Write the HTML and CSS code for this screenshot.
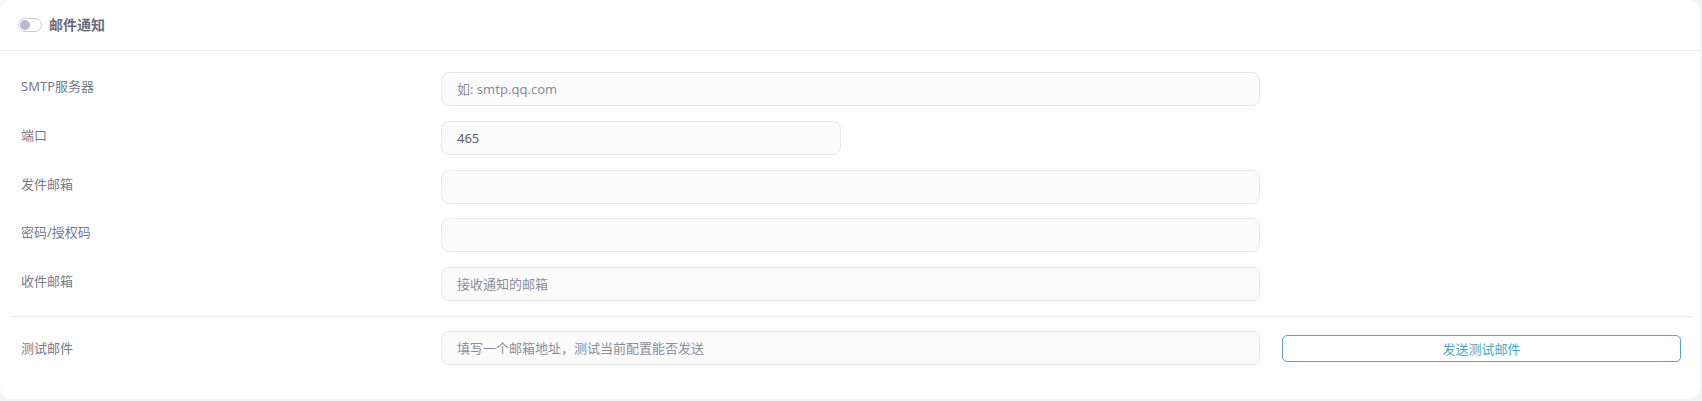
FILE: index.html
```html
<!DOCTYPE html>
<html lang="zh-CN">
<head>
<meta charset="utf-8">
<title>邮件通知</title>
<link rel="stylesheet" href="styles.css">
</head>
<body>
<div class="card">
  <div class="card-header">
    <span class="switch"><span class="knob"></span></span>
    <span class="title">邮件通知</span>
  </div>
  <div class="card-body">
    <div class="form-row">
      <label class="label">SMTP服务器</label>
      <input class="input" type="text" placeholder="如: smtp.qq.com">
    </div>
    <div class="form-row">
      <label class="label">端口</label>
      <input class="input input-short" type="text" value="465">
    </div>
    <div class="form-row">
      <label class="label">发件邮箱</label>
      <input class="input" type="text">
    </div>
    <div class="form-row">
      <label class="label">密码/授权码</label>
      <input class="input" type="password">
    </div>
    <div class="form-row">
      <label class="label">收件邮箱</label>
      <input class="input" type="text" placeholder="接收通知的邮箱">
    </div>
    <div class="divider"></div>
    <div class="form-row test-row">
      <label class="label">测试邮件</label>
      <input class="input" type="text" placeholder="填写一个邮箱地址，测试当前配置能否发送">
      <button class="btn" type="button">发送测试邮件</button>
    </div>
  </div>
</div>
</body>
</html>
```
FILE: styles.css
```css
* { box-sizing: border-box; }
html, body {
  margin: 0;
  padding: 0;
  background: #f4f5f7;
  font-family: "Noto Sans", "Noto Sans CJK SC", sans-serif;
}
.card {
  width: 1700px;
  background: #ffffff;
  border-radius: 12px;
}
.card-header {
  height: 51px;
  display: flex;
  align-items: center;
  gap: 7px;
  padding-left: 18px;
  padding-bottom: 1px;
  border-bottom: 1px solid #ececf0;
}
.switch {
  width: 24px;
  height: 14px;
  border: 1px solid #c9cbd7;
  border-radius: 7px;
  background: #fff;
  display: flex;
  align-items: center;
  padding-left: 1px;
}
.knob {
  width: 10px;
  height: 10px;
  border-radius: 50%;
  background: #b9bbcd;
}
.title {
  font-size: 14px;
  font-weight: 700;
  color: #6b6d7c;
  line-height: 20px;
}
.card-body {
  padding: 21px 0 34px 0;
}
.form-row {
  display: grid;
  grid-template-columns: 420px 819px 421px;
  align-items: start;
  padding-left: 21px;
  margin-bottom: 14.75px;
}
.form-row:nth-child(5) { margin-bottom: 0; }
.label {
  font-size: 13px;
  line-height: 20px;
  color: #777989;
  padding-top: 4px;
}
.input {
  height: 34px;
  width: 819px;
  border: 1px solid #e6e7ec;
  border-radius: 8px;
  background: #fbfbfc;
  padding: 0 15px;
  font-family: "Noto Sans", "Noto Sans CJK SC", sans-serif;
  font-size: 13px;
  color: #5a5c68;
  outline: none;
}
.input::placeholder { color: #8b8d99; }
.input-short { width: 400px; }
.divider {
  height: 1px;
  background: #e8e8ec;
  margin: 15px 8px 14px 11px;
}
.test-row {
  align-items: center;
  margin-bottom: 0;
}
.test-row .label { padding-top: 0; }
.btn {
  height: 27px;
  width: 399px;
  margin-left: 22px;
  border: 1px solid #55a9ba;
  border-radius: 5px;
  background: #fff;
  color: #4ea5b7;
  font-family: "Noto Sans", "Noto Sans CJK SC", sans-serif;
  font-size: 13px;
  cursor: pointer;
}
```
